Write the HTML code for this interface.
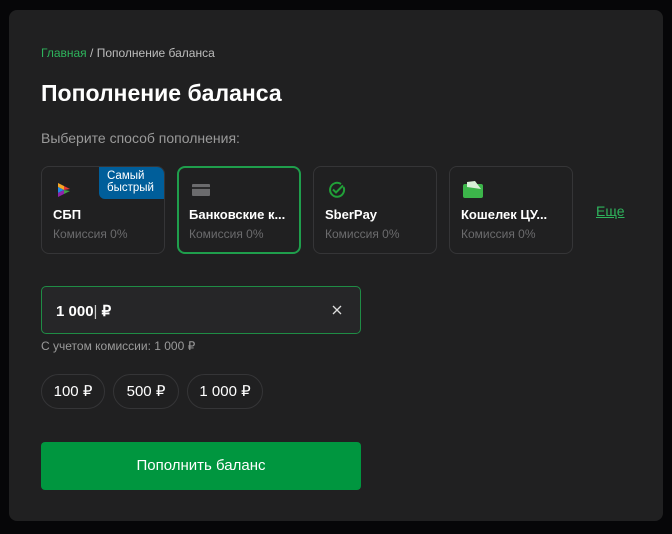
<!DOCTYPE html>
<html><head><meta charset="utf-8"><style>
*{box-sizing:border-box;margin:0;padding:0}
body{width:672px;height:534px;background:#060608;font-family:"Liberation Sans",Arial,sans-serif;position:relative;overflow:hidden;color:#fff}
.panel{position:absolute;left:9px;top:10px;width:654px;height:511px;background:#202021;border-radius:8px}
.a{position:absolute}
.bc{left:41px;top:46px;font-size:12px;color:#bdbdbd}
.bc span{color:#2eb45c}
h1{position:absolute;left:41px;top:80px;font-size:23px;font-weight:bold;color:#fff}
.sub{left:41px;top:130px;font-size:14px;color:#9a9a9a}
.card{position:absolute;top:166px;width:124px;height:88px;border:1px solid #353537;border-radius:8px;overflow:hidden}
.card.sel{border:2px solid #1f9e4c}
.card .t{position:absolute;left:11px;top:40px;font-size:13px;font-weight:bold;color:#fff;white-space:nowrap}
.card .c{position:absolute;left:11px;top:60px;font-size:12px;color:#6b6b6d}
.card.sel .t{left:10px;top:39px}.card.sel .c{left:10px;top:59px}
.badge{position:absolute;right:0;top:0;width:65px;height:32px;background:#005e9a;border-bottom-left-radius:6px;font-size:11.5px;line-height:12px;color:#fff;padding:3px 0 0 8px}
.more{left:596px;top:203px;font-size:14px;color:#2eb45c;text-decoration:underline}
.inp{left:41px;top:286px;width:320px;height:48px;border:1px solid #1f8c45;border-radius:5px;background:#262628}
.inp .v{position:absolute;left:14px;top:15px;font-size:15px;font-weight:bold}
.hint{left:41px;top:339px;font-size:12px;color:#9a9a9a}
.chip{position:absolute;top:374px;height:35px;border:1px solid #353537;border-radius:18px;font-size:15px;line-height:33px;text-align:center;color:#fff}
.btn{left:41px;top:442px;width:320px;height:48px;background:#00963f;border-radius:4px;font-size:15px;line-height:48px;text-align:center;color:#fff}
</style></head><body>
<div class="panel"></div>
<div class="a bc"><span>Главная</span> / Пополнение баланса</div>
<h1>Пополнение баланса</h1>
<div class="a sub">Выберите способ пополнения:</div>
<div class="card" style="left:41px">
<svg class="a" style="left:15px;top:15px" width="14" height="16" viewBox="0 0 14 16"><path d="M1 1L7 4V8L1 5Z" fill="#f5a623"/><path d="M1 5L7 8L1 11Z" fill="#1e88e5"/><path d="M1 11L7 8L7 12L1 15Z" fill="#8e24aa"/><path d="M7 4L13 7L7 8Z" fill="#e53935"/><path d="M7 8L13 9L7 12Z" fill="#43a047"/></svg>
<div class="badge">Самый<br>быстрый</div>
<div class="t">СБП</div><div class="c">Комиссия 0%</div></div>
<div class="card sel" style="left:177px">
<svg class="a" style="left:12px;top:15px" width="20" height="14"><rect x="1" y="1" width="18" height="12" rx="1" fill="#6b6b6d"/><rect x="1" y="4" width="18" height="2" fill="#2a2a2b"/></svg>
<div class="t">Банковские к...</div><div class="c">Комиссия 0%</div></div>
<div class="card" style="left:313px">
<svg class="a" style="left:14px;top:14px" width="18" height="18" viewBox="0 0 18 18"><path d="M15.5 6A7 7 0 1 1 13 3" fill="none" stroke="#21a038" stroke-width="2"/><path d="M5 8.5L8 11.5L15 4.5" fill="none" stroke="#21a038" stroke-width="2"/></svg>
<div class="t">SberPay</div><div class="c">Комиссия 0%</div></div>
<div class="card" style="left:449px">
<svg class="a" style="left:13px;top:14px" width="20" height="17"><rect x="0" y="3" width="20" height="14" rx="2" fill="#3cb54a"/><path d="M4 1L12 0L18 8L4 6Z" fill="#d8f0d8"/></svg>
<div class="t">Кошелек ЦУ...</div><div class="c">Комиссия 0%</div></div>
<div class="a more">Еще</div>
<div class="a inp"><div class="v">1 000<span style="font-weight:normal;color:#ccc">|</span> ₽</div>
<svg class="a" style="left:290px;top:18px" width="10" height="10"><path d="M1 1L9 9M9 1L1 9" stroke="#ddd" stroke-width="1.3"/></svg></div>
<div class="a hint">С учетом комиссии: 1 000 ₽</div>
<div class="chip" style="left:41px;width:64px">100 ₽</div>
<div class="chip" style="left:113px;width:66px">500 ₽</div>
<div class="chip" style="left:187px;width:76px">1 000 ₽</div>
<div class="a btn">Пополнить баланс</div>
</body></html>
